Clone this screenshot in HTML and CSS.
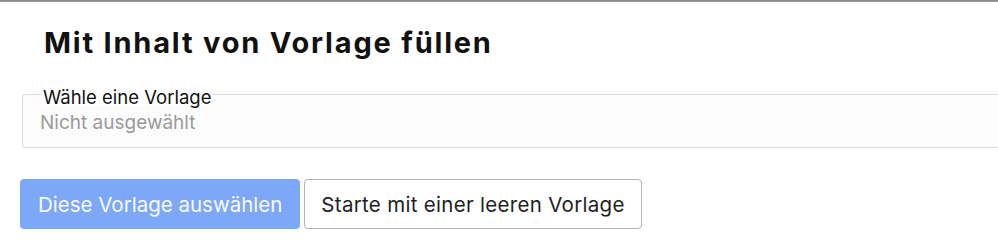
FILE: index.html
```html
<!DOCTYPE html>
<html lang="de">
<head>
<meta charset="utf-8">
<link rel="stylesheet" href="styles.css">
</head>
<body>
<div class="topline"></div>
<div class="dialog">
  <h1 class="title">Mit Inhalt von Vorlage füllen</h1>
  <div class="field">
    <span class="field-label">Wähle eine Vorlage</span>
    <div class="select">Nicht ausgewählt</div>
  </div>
  <div class="actions">
    <button class="btn btn-primary">Diese Vorlage auswählen</button>
    <button class="btn btn-secondary">Starte mit einer leeren Vorlage</button>
  </div>
</div>
</body>
</html>
```

FILE: styles.css
```css
html, body {
  margin: 0;
  padding: 0;
  background: #ffffff;
  width: 998px;
  height: 242px;
  overflow: hidden;
  font-family: Inter, "Liberation Sans", sans-serif;
}
.topline {
  height: 2px;
  background: linear-gradient(#7e7e7e, #a8a8a8);
}
.dialog {
  padding: 0 0 0 20px;
}
.title {
  margin: 0;
  padding: 23px 0 0 24px;
  font-size: 29px;
  line-height: 36px;
  font-weight: 700;
  color: #111111;
  letter-spacing: 1.8px;
}
.field {
  position: relative;
  margin: 33px 0 0 2px;
}
.field-label {
  position: absolute;
  left: 20px;
  top: -6px;
  background: #ffffff;
  padding: 0 1px;
  font-size: 18.5px;
  line-height: 18px;
  color: #111111;
}
.select {
  height: 54px;
  box-sizing: border-box;
  border: 1px solid #dcdcdc;
  border-right: none;
  border-radius: 4px 0 0 4px;
  background: #fcfcfc;
  padding: 17px 0 0 17px;
  font-size: 19px;
  line-height: 22px;
  color: #9a9a9a;
}
.actions {
  display: flex;
  gap: 4px;
  margin-top: 31px;
}
.btn {
  height: 50px;
  box-sizing: border-box;
  border-radius: 4px;
  font-family: Inter, "Liberation Sans", sans-serif;
  font-size: 20.5px;
  white-space: nowrap;
  cursor: pointer;
}
.btn-primary {
  padding: 0 17px;
  background: #7da8f7;
  border: 1px solid #7da8f7;
  color: #f8faff;
}
.btn-secondary {
  padding: 0 16px;
  letter-spacing: 0.3px;
  background: #ffffff;
  border: 1px solid #b4b4b4;
  color: #1e1e1e;
}
```
